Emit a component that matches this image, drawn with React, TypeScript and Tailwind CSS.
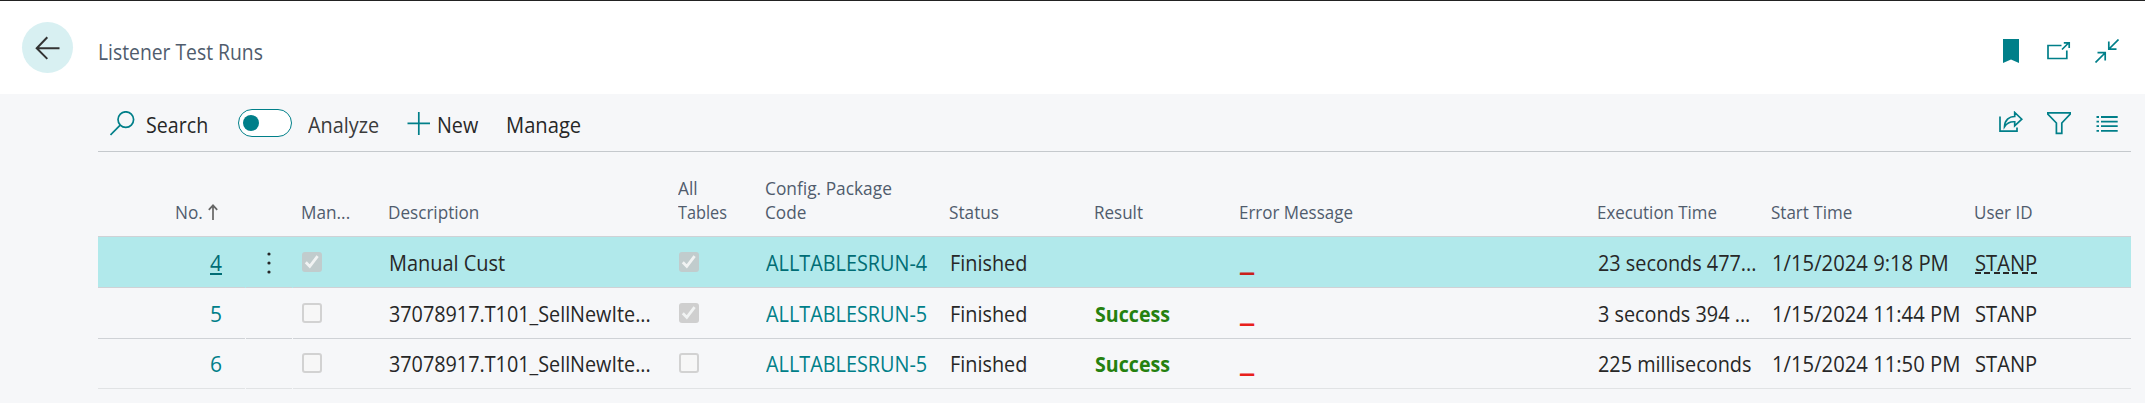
import type { ReactNode } from "react";

type TextProps = { children: ReactNode; fit?: number; className?: string };

function Label({ children, fit = 0.945, className = "" }: TextProps) {
  return (
    <span className={`inline-block origin-left whitespace-nowrap ${className}`} style={{ transform: `scaleX(${fit})` }}>
      {children}
    </span>
  );
}

function Icon({ children }: { children: ReactNode }) {
  return (
    <svg width="24" height="24" viewBox="0 0 24 24" fill="none" stroke="#007f89" strokeWidth="1.7" className="block shrink-0">
      {children}
    </svg>
  );
}

const COLS = "grid grid-cols-[148px_47px_87px_290px_87px_184px_145px_145px_358px_174px_203px_165px]";

function Check({ on, active }: { on: boolean; active?: boolean }) {
  if (!on) return <span className="block h-5 w-5 rounded-[3px] border-2 border-[#d2d2d2] bg-[#f7f7f7]" />;
  return (
    <span className={`block h-5 w-5 rounded-[3px] ${active ? "bg-[#c1cccd]" : "bg-[#cfcfcf]"}`}>
      <svg width="20" height="20" viewBox="0 0 20 20" fill="none" stroke="#f1f3f3" strokeWidth="2.8">
        <path d="M3.8 10.2 7.8 14.4 15.6 4.2" />
      </svg>
    </span>
  );
}

type Row = {
  no: string; manual: boolean; desc: string; descFit: number; all: boolean; code: string;
  success: boolean; exec: string; start: string;
};

const rows: Row[] = [
  { no: "4", manual: true, desc: "Manual Cust", descFit: 0.95, all: true, code: "ALLTABLESRUN-4", success: false, exec: "23 seconds 477...", start: "1/15/2024 9:18 PM" },
  { no: "5", manual: false, desc: "37078917.T101_SellNewIte...", descFit: 0.942, all: true, code: "ALLTABLESRUN-5", success: true, exec: "3 seconds 394 ...", start: "1/15/2024 11:44 PM" },
  { no: "6", manual: false, desc: "37078917.T101_SellNewIte...", descFit: 0.942, all: false, code: "ALLTABLESRUN-5", success: true, exec: "225 milliseconds", start: "1/15/2024 11:50 PM" },
];

function TableRow({ row, index }: { row: Row; index: number }) {
  const active = index === 0;
  const last = index === 2;
  const line = last ? "border-[#e1e3e5]" : "border-[#cfd2d6]";
  const cell = `flex items-center border-b pl-[9px] ${last ? "pt-px" : "pt-[2px]"} ${line}`;
  const check = `flex items-start border-b pl-[9px] ${last ? "pt-[14px]" : "pt-[15px]"} ${line}`;
  const link = active ? "text-[#006d75]" : "text-[#007f89]";
  return (
    <div className={`${COLS} ${last ? "h-[50px]" : "h-[51px]"} ${active ? "bg-[#b1e9eb]" : ""} text-[21px] leading-[30px] text-[#272727]`}>
      <div className={`mr-px flex items-center justify-end border-b pr-[23px] ${last ? "pt-px" : "pt-[2px]"} ${line} ${link}`}>
        <span className="relative">
          {row.no}
          {active && <span className="absolute bottom-[3px] left-0 h-[2px] w-[12px] bg-[#006d75]" />}
        </span>
      </div>
      <div className={`mr-px flex items-center justify-center border-b pt-px ${line}`}>
        {active && (
          <svg width="4" height="22" viewBox="0 0 4 22" fill="#272727">
            <circle cx="2" cy="2" r="1.6" /><circle cx="2" cy="11" r="1.6" /><circle cx="2" cy="20" r="1.6" />
          </svg>
        )}
      </div>
      <div className={check}><Check on={row.manual} active={active} /></div>
      <div className={cell}><Label fit={row.descFit}>{row.desc}</Label></div>
      <div className={check}><Check on={row.all} active={active} /></div>
      <div className={`${cell} ${link}`}><Label fit={0.945}>{row.code}</Label></div>
      <div className={cell}><Label>Finished</Label></div>
      <div className={`${cell} text-[#25810f]`}>{row.success && <Label fit={0.935} className="font-bold">Success</Label>}</div>
      <div className={`${cell} ${active ? "text-[#c9211b]" : "text-[#e8201c]"}`}><Label fit={1.35} className="font-extrabold">_</Label></div>
      <div className={cell}><Label>{row.exec}</Label></div>
      <div className={cell}><Label fit={0.964}>{row.start}</Label></div>
      <div className={cell}>
        <span className="relative">
          <Label fit={0.96}>STANP</Label>
          {active && (
            <span className="absolute bottom-[4px] left-0 h-[2px] w-[62px] bg-[repeating-linear-gradient(90deg,#272727_0_6px,transparent_6px_9.33px)]" />
          )}
        </span>
      </div>
    </div>
  );
}

export default function App() {
  return (
    <div className="flex h-[403px] w-full flex-col overflow-hidden bg-[#f6f7f9] font-['Open_Sans','Noto_Sans',sans-serif]">
      <header className="flex h-[94px] shrink-0 border-t border-[#222] bg-white pr-[26px] pl-[22px]">
        <div className="mt-[21px] flex h-[51px] w-[51px] items-center justify-center rounded-full bg-[#d8f0f2]">
          <svg width="26" height="24" viewBox="0 0 26 24" fill="none" stroke="#333" strokeWidth="2" className="block">
            <path d="M24.5 12.3H1.5M12.3 1.3 1.7 12.3l10.6 10.6" />
          </svg>
        </div>
        <div className="mt-[36px] ml-[25px] text-[21.5px] leading-[30px] text-[#505c6d]"><Label fit={0.898}>Listener Test Runs</Label></div>
        <div className="mt-[38px] ml-auto flex gap-6">
          <Icon><path d="M4 0H20V24L12 20.5 4 24Z" fill="#007f89" stroke="none" /></Icon>
          <Icon><path d="M14.5 6.5H1V19.5H19.8V11.5M15 10.5 22 3.5M16.8 3.8H22.2V9" /></Icon>
          <Icon><path d="M.5 23.5 10 14M2.5 13.7H10.2V21.5M23.5.5 14 10M13.8 2.5V10.2H21.5" /></Icon>
        </div>
      </header>

      <div className="mr-[14px] ml-[98px] flex h-[58px] shrink-0 items-start border-b border-[#c5c9cd] pr-3 text-[21px] leading-[30px] text-[#272727]">
        <svg width="25" height="25" viewBox="0 0 25 25" fill="none" stroke="#007f89" strokeWidth="1.7" className="mt-[17px] ml-3 block">
          <circle cx="15.8" cy="8.6" r="7.8" /><path d="M10.2 14.2.5 24" />
        </svg>
        <div className="mt-[16px] ml-[10.5px] w-[92.5px]"><Label fit={0.935}>Search</Label></div>
        <div className="mt-[15px] flex h-7 w-[54px] items-center rounded-full border-[1.3px] border-[#007f89] bg-white pl-1">
          <span className="h-4 w-4 rounded-full bg-[#007f89]" />
        </div>
        <div className="mt-[16px] ml-4 w-[99px] text-[#3b3b3b]"><Label fit={0.945}>Analyze</Label></div>
        <svg width="24" height="24" viewBox="0 0 24 24" fill="none" stroke="#007f89" strokeWidth="1.7" className="mt-[17px] block">
          <path d="M.5 12.3H23M11.8 1V24" />
        </svg>
        <div className="mt-[16px] ml-[6px] w-[68.5px]"><Label fit={0.94}>New</Label></div>
        <div className="mt-[16px]"><Label fit={0.96}>Manage</Label></div>
        <div className="mt-[17px] ml-auto flex gap-6">
          <Icon><path d="M1 5.5V20.2H18V16.5M5.5 15.8C5.7 9.3 10 5.5 15.7 5.5V1.5L22.8 8.2 15.7 14.9V10.8C11.5 10.5 8 12 5.5 15.8Z" /></Icon>
          <Icon><path d="M.8 1.8H23.2V3L14.8 12V22.3H9.4V12L.8 3Z" /></Icon>
          <Icon><path d="M1.5 6H4M6 6H22.7M1.5 10.6H4M6 10.6H22.7M1.5 15.2H4M6 15.2H22.7M1.5 19.8H4M6 19.8H22.7" strokeWidth="1.8" /></Icon>
        </div>
      </div>

      <div className="mr-[14px] ml-[98px]">
        <div className={`${COLS} h-[85px] items-end border-b border-[#cfd2d6] pb-3 text-[18.5px] leading-[24px] text-[#505c6d]`}>
          <div className="flex items-center pl-[77px]">
            <span className="w-[33px]"><Label fit={0.93}>No.</Label></span>
            <svg width="10" height="16" viewBox="0 0 10 16" fill="none" stroke="#666" strokeWidth="1.7" className="mb-px">
              <path d="M5 16V1.5M.8 5.8 5 1.3 9.2 5.8" />
            </svg>
          </div>
          <div />
          <div className="pl-2"><Label fit={0.93}>Man...</Label></div>
          <div className="pl-2"><Label fit={0.925}>Description</Label></div>
          <div className="flex flex-col items-start pl-2"><Label fit={0.93}>All</Label><Label fit={0.88}>Tables</Label></div>
          <div className="flex flex-col items-start pl-2"><Label fit={0.937}>Config. Package</Label><Label fit={0.93}>Code</Label></div>
          <div className="pl-2"><Label fit={0.93}>Status</Label></div>
          <div className="pl-2"><Label fit={0.92}>Result</Label></div>
          <div className="pl-2"><Label fit={0.917}>Error Message</Label></div>
          <div className="pl-2"><Label fit={0.912}>Execution Time</Label></div>
          <div className="pl-2"><Label fit={0.92}>Start Time</Label></div>
          <div className="pl-2"><Label fit={0.92}>User ID</Label></div>
        </div>
        {rows.map((row, i) => <TableRow key={row.no} row={row} index={i} />)}
      </div>
    </div>
  );
}
